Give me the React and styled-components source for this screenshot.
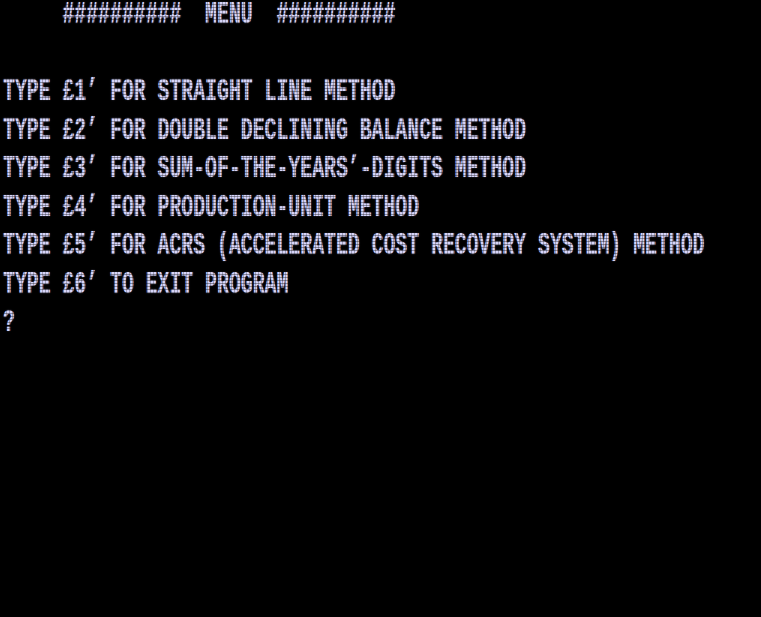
import React from "react";
import styled, { createGlobalStyle } from "styled-components";

const Global = createGlobalStyle`
  html, body { margin: 0; padding: 0; background: #000; }
  body { overflow: hidden; }
`;

const Screen = styled.div`
  position: relative;
  width: 761px;
  height: 617px;
  background: #000;
  padding-left: 3px;
  box-sizing: border-box;
  display: flex;
  flex-direction: column;
  overflow: hidden;
`;

const Line = styled.div`
  height: 38.56px;
  flex: none;
`;

const Text = styled.span`
  display: inline-block;
  margin-top: -1px;
  font-family: "Liberation Mono", "DejaVu Sans Mono", monospace;
  font-weight: bold;
  font-size: 19.82px;
  line-height: 1;
  white-space: pre;
  color: #d6d4f8;
  transform: scaleY(1.58);
  transform-origin: 0 0;
  text-shadow: 0 0 1px rgba(200, 200, 255, 0.6);
`;

const Scan = styled.div`
  position: absolute;
  inset: 0;
  pointer-events: none;
  background-image:
    repeating-linear-gradient(0deg, rgba(0,0,0,0.35) 0 1px, transparent 1px 3px),
    repeating-linear-gradient(90deg, rgba(0,0,0,0.25) 0 1px, transparent 1px 3px);
`;

const lines = [
  "     ##########  MENU  ##########",
  "",
  "TYPE £1’ FOR STRAIGHT LINE METHOD",
  "TYPE £2’ FOR DOUBLE DECLINING BALANCE METHOD",
  "TYPE £3’ FOR SUM-OF-THE-YEARS’-DIGITS METHOD",
  "TYPE £4’ FOR PRODUCTION-UNIT METHOD",
  "TYPE £5’ FOR ACRS (ACCELERATED COST RECOVERY SYSTEM) METHOD",
  "TYPE £6’ TO EXIT PROGRAM",
  "?",
];

export default function App() {
  return (
    <>
      <Global />
      <Screen>
        {lines.map((l, i) => (
          <Line key={i}>
            <Text>{l}</Text>
          </Line>
        ))}
        <Scan />
      </Screen>
    </>
  );
}
